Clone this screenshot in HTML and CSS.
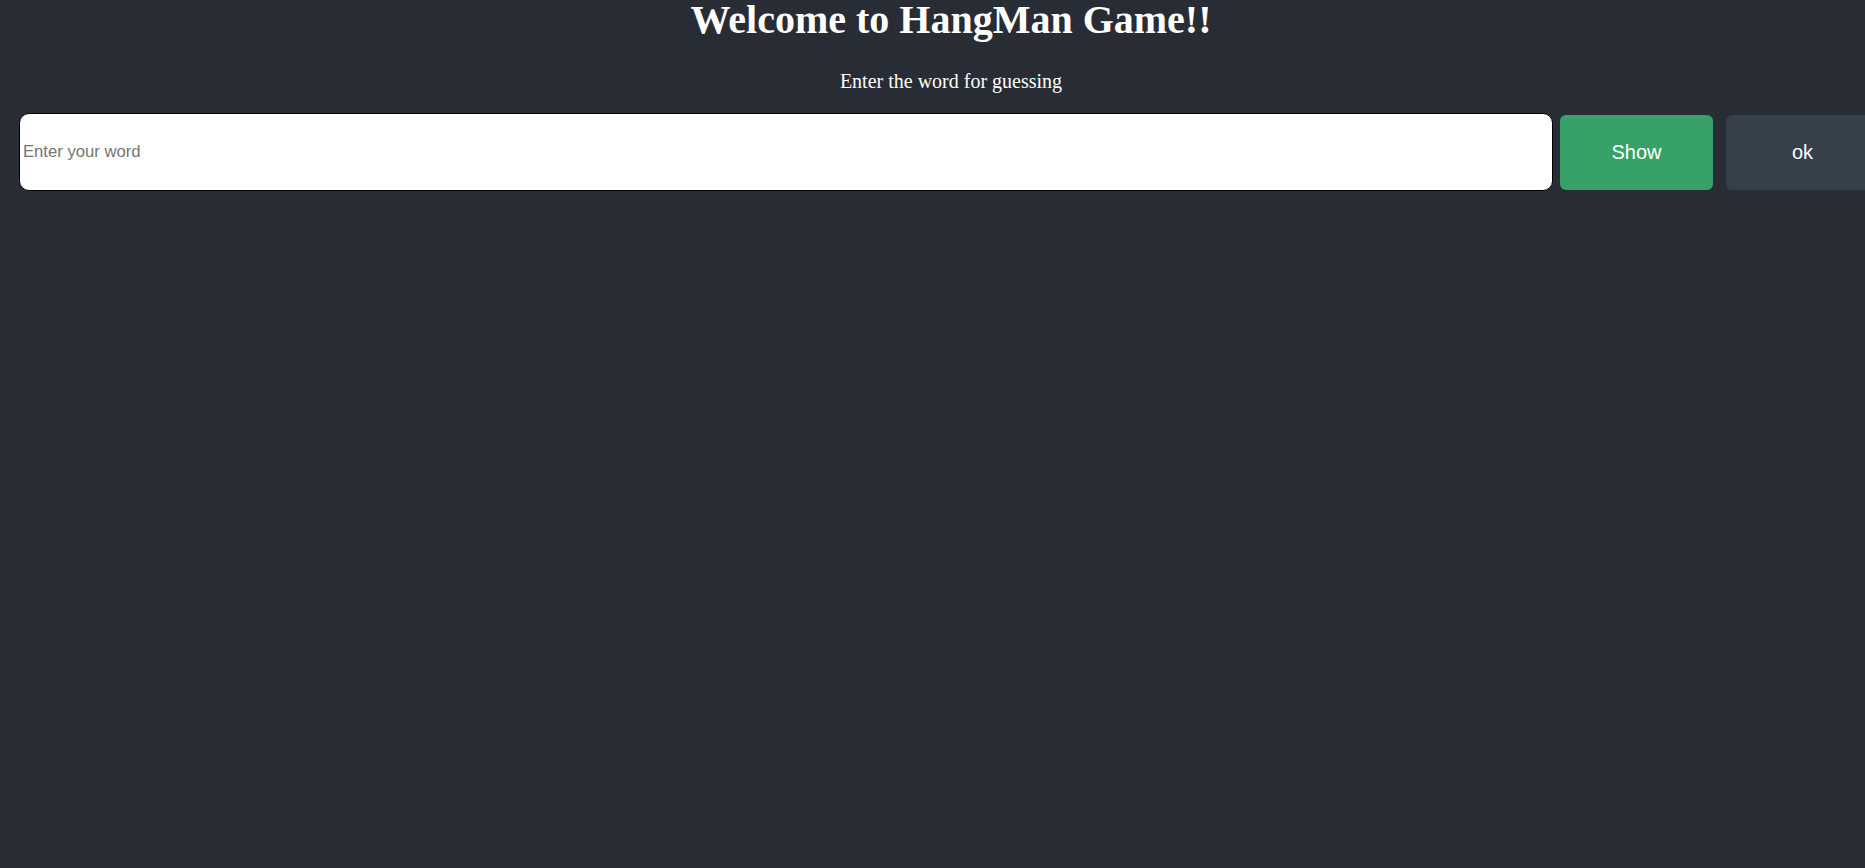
FILE: index.html
```html
<!DOCTYPE html>
<html lang="en">
<head>
<meta charset="utf-8">
<title>HangMan Game</title>
<link rel="stylesheet" href="styles.css">
</head>
<body>
<div class="page">
  <h1 class="title">Welcome to HangMan Game!!</h1>
  <p class="subtitle">Enter the word for guessing</p>
  <div class="row">
    <input class="word-input" type="password" placeholder="Enter your word">
    <button class="btn btn-show" type="button">Show</button>
    <button class="btn btn-ok" type="button">ok</button>
  </div>
</div>
</body>
</html>
```
FILE: styles.css
```css
html, body {
  margin: 0;
  padding: 0;
  background: #282c34;
  overflow: hidden;
  height: 100%;
}

.page {
  width: 1882px;
  padding-left: 10px;
  color: #ffffff;
  font-family: "Liberation Serif", "Times New Roman", serif;
}

.title {
  margin: 0;
  font-size: 40px;
  line-height: 40px;
  font-weight: bold;
  text-align: center;
}

.subtitle {
  margin: 30px 0 0;
  font-size: 20px;
  line-height: 23px;
  text-align: center;
}

.row {
  display: flex;
  align-items: center;
  margin-top: 20px;
  padding-left: 9px;
}

.word-input {
  box-sizing: border-box;
  width: 1534px;
  height: 78px;
  margin: 0;
  padding: 0 3px;
  border: 1.25px solid #000000;
  border-radius: 10px;
  background: #ffffff;
  font-family: "Liberation Sans", Arial, sans-serif;
  font-size: 16.67px;
  color: #000000;
  outline: none;
}

.word-input::placeholder {
  color: #757575;
}

.btn {
  box-sizing: border-box;
  width: 153px;
  height: 75px;
  flex: none;
  border: none;
  border-radius: 6px;
  color: #ffffff;
  font-family: "Liberation Sans", Arial, sans-serif;
  font-size: 20px;
  padding: 0;
}

.btn-show {
  margin-left: 7px;
  background: #38a169;
}

.btn-ok {
  margin-left: 13px;
  background: #36404b;
}
```
